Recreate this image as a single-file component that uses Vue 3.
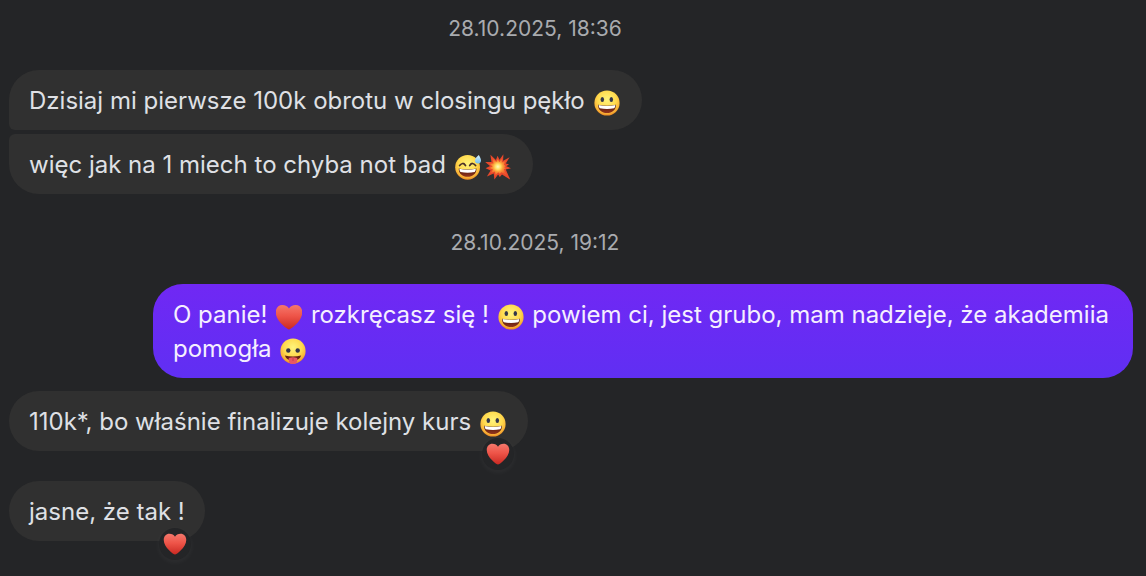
<script setup>
const items = [
  { kind: 'time', text: '28.10.2025, 18:36' },
  { kind: 'in', pos: 'first', parts: ['Dzisiaj mi pierwsze 100k obrotu w closingu pękło ', { e: 'grin' }] },
  { kind: 'in', pos: 'last', parts: ['więc jak na 1 miech to chyba not bad ', { e: 'sweat' }, { e: 'boom' }] },
  { kind: 'time', text: '28.10.2025, 19:12' },
  {
    kind: 'out',
    parts: [
      'O panie! ', { e: 'heart' }, ' rozkręcasz się ! ', { e: 'grin' },
      ' powiem ci, jest grubo, mam nadzieje, że akademiia ', 'pomogła ', { e: 'tongue' },
    ],
  },
  { kind: 'in', reaction: true, parts: ['110k*, bo właśnie finalizuje kolejny kurs ', { e: 'grin' }] },
  { kind: 'in', reaction: true, parts: ['jasne, że tak !'] },
]
const labels = { grin: '😀', sweat: '😅', boom: '💥', heart: '❤️', tongue: '😛' }
</script>

<template>
  <main class="chat">
    <svg class="defs" width="0" height="0" aria-hidden="true">
      <defs>
        <radialGradient id="faceFill" cx="50%" cy="36%" r="66%">
          <stop offset="0" stop-color="#fff47c" />
          <stop offset="0.55" stop-color="#ffda4e" />
          <stop offset="0.82" stop-color="#f9b437" />
          <stop offset="1" stop-color="#e98020" />
        </radialGradient>
        <linearGradient id="heartFill" x1="0" y1="0" x2="0" y2="1">
          <stop offset="0" stop-color="#f5786c" />
          <stop offset="0.45" stop-color="#ee5448" />
          <stop offset="1" stop-color="#c92922" />
        </linearGradient>
        <linearGradient id="mouthFill" x1="0" y1="0" x2="0" y2="1">
          <stop offset="0" stop-color="#46170c" />
          <stop offset="1" stop-color="#96351d" />
        </linearGradient>
        <linearGradient id="dropFill" x1="0" y1="0" x2="0" y2="1">
          <stop offset="0" stop-color="#d5f1ff" />
          <stop offset="1" stop-color="#72bdec" />
        </linearGradient>
        <radialGradient id="boomFill" cx="50%" cy="50%" r="50%">
          <stop offset="0" stop-color="#fffbc0" />
          <stop offset="0.3" stop-color="#ffe065" />
          <stop offset="0.58" stop-color="#fb9b38" />
          <stop offset="1" stop-color="#ef5a2c" />
        </radialGradient>
      </defs>
      <symbol id="emoji-grin" viewBox="0 0 26 26">
        <circle cx="13" cy="13" r="12.6" fill="url(#faceFill)" />
        <ellipse cx="8.3" cy="9.5" rx="1.75" ry="2.6" fill="#34374a" />
        <ellipse cx="17.3" cy="9.5" rx="1.75" ry="2.6" fill="#34374a" />
        <path d="M4 14.8Q13 16.8 22 14.8C22 20 18.2 23.1 13 23.1S4 20 4 14.8Z" fill="url(#mouthFill)" />
        <path d="M4.6 15Q13 16.8 21.4 15Q21.3 17.2 20.2 18.2Q13 19.7 5.8 18.2Q4.7 17.2 4.6 15Z" fill="#fff" />
      </symbol>
      <symbol id="emoji-sweat" viewBox="0 0 26 26">
        <circle cx="12.6" cy="13.3" r="12.4" fill="url(#faceFill)" />
        <path d="M4.6 11.6Q7.8 7.4 10.5 11.5M14.7 11.5Q17.4 7.4 20.6 11.6" fill="none" stroke="#4b3028" stroke-width="1.7" stroke-linecap="round" />
        <path d="M3.7 14.5Q12.6 16.4 21.5 14.5C21.5 19.7 17.8 22.8 12.6 22.8S3.7 19.7 3.7 14.5Z" fill="url(#mouthFill)" />
        <path d="M4.3 14.8Q12.6 16.6 20.9 14.8Q20.7 17 19.7 18Q12.6 19.4 5.5 18Q4.5 17 4.3 14.8Z" fill="#fff" />
        <path d="M23.8 1C25.4 3.6 26 5.2 26 6.6A3 3 0 0 1 20 6.4C20 4.6 22 2.6 23.8 1Z" fill="url(#dropFill)" />
      </symbol>
      <symbol id="emoji-tongue" viewBox="0 0 26 26">
        <circle cx="13" cy="13" r="12.6" fill="url(#faceFill)" />
        <circle cx="8.3" cy="12.5" r="2.2" fill="#34374a" />
        <circle cx="17.7" cy="12.5" r="2.2" fill="#34374a" />
        <path d="M4.8 17.4Q13 19.4 21.2 17.4Q19.5 22.5 13 22.5T4.8 17.4Z" fill="#692315" />
        <path d="M8.8 20Q13 18.4 17.2 20V22.4A4.2 3.6 0 0 1 8.8 22.4Z" fill="#e95863" />
        <path d="M13 20V23" stroke="#bd3a46" stroke-width="0.8" />
      </symbol>
      <symbol id="emoji-heart" viewBox="0 0 26 26">
        <path d="M13 25.5C11.6 25.5 -.3 17 -.3 8.2C-.3 3.9 2.6 .9 6.3 .9C9.4 .9 11.8 2.4 13 4.4C14.2 2.4 16.6 .9 19.7 .9C23.4 .9 26.3 3.9 26.3 8.2C26.3 17 14.4 25.5 13 25.5Z" fill="url(#heartFill)" />
      </symbol>
      <symbol id="emoji-boom" viewBox="0 0 26 26">
        <path d="M5.4 .8L10.9 6.1L12.6 1.8L14.5 5.8L18.4 .2L18.1 6.8L24.6 3.2L20.8 9.6L24 10.2L21.3 12.2L26 14.2L20.8 15.5L25.2 25.6L17 20.5L14.8 23L13.1 20.4L9.4 25.4L8.7 19.5L1.9 22.6L5.6 16.4L.6 14.3L5 12L.2 8.1L6.5 8Z" fill="#e8482b" />
        <path d="M7.2 3.8L11.3 8L12.8 5L14.4 8L16.9 4.4L16.9 8.6L21.5 6.2L18.8 10.6L20.8 12.2L19.1 13.3L21.6 14.2L18.8 15.2L21.8 21L16.2 18.2L14.8 20L13.2 18.2L10.4 21.5L10 17.6L5.4 19.3L8 15.5L4 14.1L7.6 12.4L4 9.4L8.5 9.5Z" fill="url(#boomFill)" />
      </symbol>
    </svg>

    <template v-for="(item, i) in items" :key="i">
      <time v-if="item.kind === 'time'" class="time">{{ item.text }}</time>
      <div v-else class="row" :class="[item.kind, item.pos, { reacted: item.reaction }]">
        <p class="bubble">
          <template v-for="(part, j) in item.parts" :key="j">
            <template v-if="typeof part === 'string'">{{ part }}</template>
            <svg v-else class="emoji" role="img" :aria-label="labels[part.e]"><use :href="'#emoji-' + part.e" /></svg>
          </template>
          <span v-if="item.reaction" class="reaction">
            <svg class="mini" role="img" :aria-label="labels.heart"><use href="#emoji-heart" /></svg>
          </span>
        </p>
      </div>
    </template>
  </main>
</template>

<style>
body {
  background: #242527;
}
</style>

<style scoped>
.chat {
  display: flex;
  flex-direction: column;
  padding: 14px 13px 32px 9px;
  font-family: Inter, "Noto Sans", sans-serif;
  font-size: 24px;
  line-height: 34px;
  color: #dfe0e5;
}
.defs {
  position: absolute;
}
.time {
  align-self: center;
  margin: 0 72px 26px 0;
  font-size: 21px;
  line-height: 30px;
  color: #a9abaf;
}
.row {
  display: flex;
}
.bubble {
  position: relative;
  margin: 0;
  padding: 14px 20px 12px;
  border-radius: 30px;
  background: #303030;
  white-space: pre-wrap;
}
.first {
  margin-bottom: 4px;
}
.first .bubble {
  border-bottom-left-radius: 6px;
}
.last {
  margin-bottom: 34px;
}
.last .bubble {
  border-top-left-radius: 6px;
}
.out {
  justify-content: flex-end;
  padding-left: 144px;
  margin-bottom: 13px;
}
.out .bubble {
  background: linear-gradient(#7028f4, #602ff3);
  color: #f5efff;
}
.reacted + .reacted {
  margin-top: 30px;
}
.emoji {
  width: 26px;
  height: 26px;
  margin: 0 2px;
  vertical-align: -7px;
}
.reaction {
  position: absolute;
  right: 14px;
  bottom: -19px;
  display: flex;
  align-items: center;
  justify-content: center;
  width: 32px;
  height: 32px;
  border-radius: 16px;
  background: #242527;
  box-shadow: 0 2px 6px rgba(255, 255, 255, 0.05);
}
.mini {
  width: 24px;
  height: 22px;
}
</style>
